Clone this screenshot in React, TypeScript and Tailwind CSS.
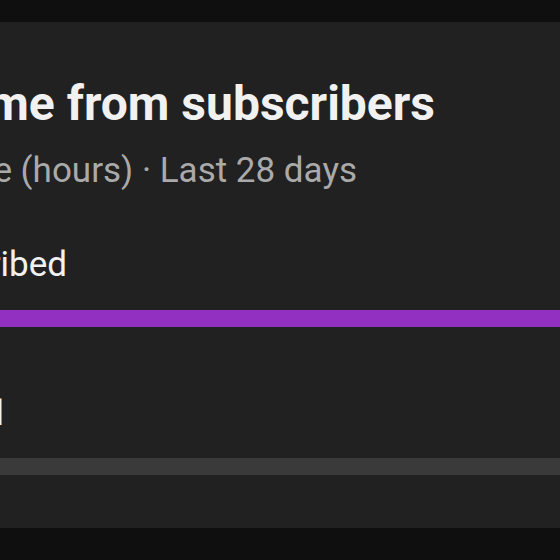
import React from "react";

export default function App() {
  const font = { fontFamily: "Roboto, 'Noto Sans', sans-serif" };
  return (
    <div className="w-[560px] h-[560px] overflow-hidden bg-[#0f0f0f] pt-[22px]" style={font}>
      <div className="h-[506px] bg-[#212121] pt-[54px] flex flex-col overflow-hidden">
        <div className="w-[435px] flex justify-end whitespace-nowrap text-[48px] leading-[56px] font-bold text-[#f1f1f1]">
          <span className="shrink-0">Watch time from subscribers</span>
        </div>
        <div className="w-[357px] mt-[19px] flex justify-end whitespace-nowrap text-[35px] leading-[40px] text-[#aaaaaa]">
          <span className="shrink-0">Watch time (hours) · Last 28 days</span>
        </div>
        <div className="w-[67px] mt-[54px] flex justify-end whitespace-nowrap text-[35px] leading-[40px] text-[#f1f1f1]">
          <span className="shrink-0">Subscribed</span>
        </div>
        <div className="mt-[25px] h-[17px] w-full bg-[#9230c2]" />
        <div className="w-[4px] mt-[67px] flex justify-end whitespace-nowrap text-[35px] leading-[40px] text-[#f1f1f1]">
          <span className="shrink-0">Total</span>
        </div>
        <div className="mt-[24px] h-[17px] w-full bg-[#3a3a3a]" />
      </div>
    </div>
  );
}
